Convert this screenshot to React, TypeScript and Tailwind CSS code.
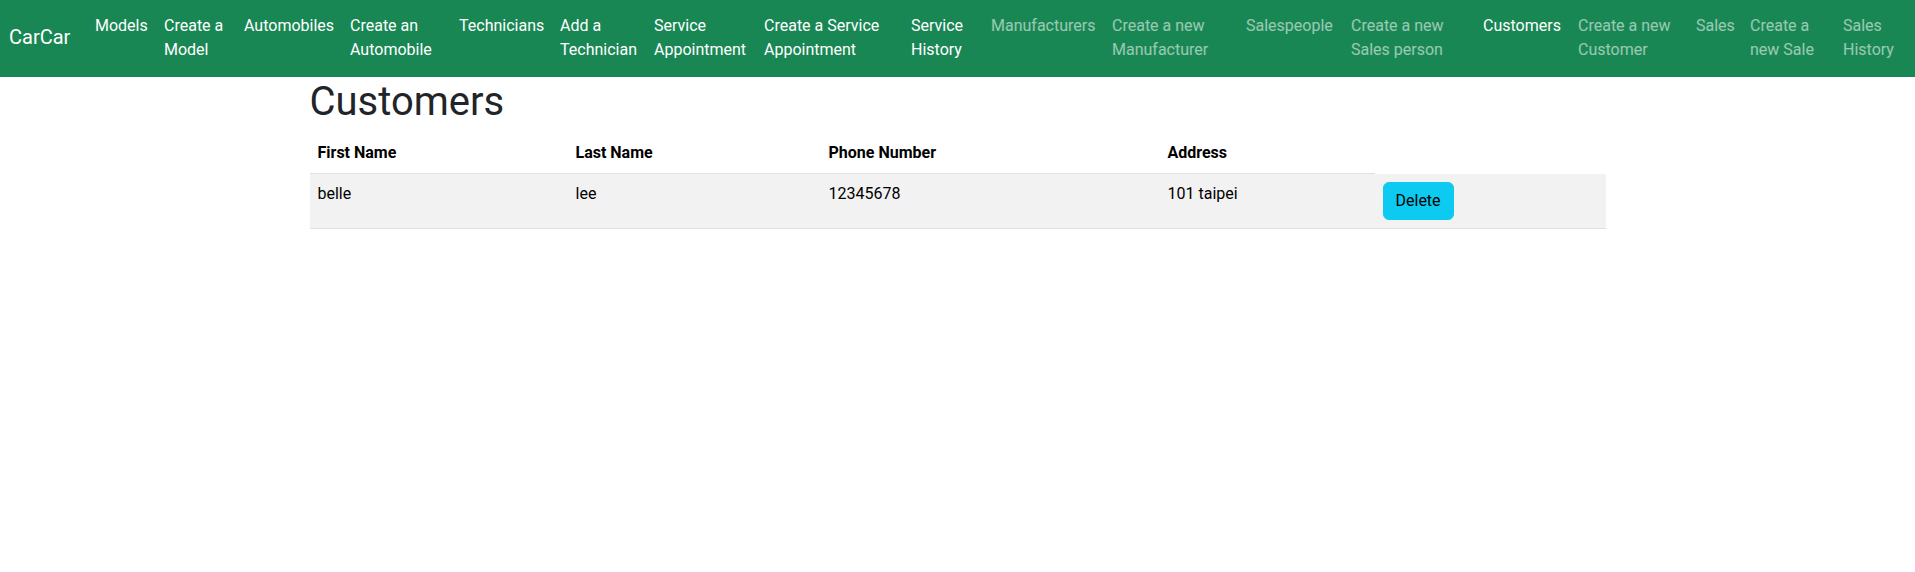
import React from "react";

interface NavItem {
  lines: string[];
  width: string;
  active: boolean;
}

const navItems: NavItem[] = [
  { lines: ["Models"], width: "w-[69px]", active: true },
  { lines: ["Create a", "Model"], width: "w-[80px]", active: true },
  { lines: ["Automobiles"], width: "w-[106px]", active: true },
  { lines: ["Create an", "Automobile"], width: "w-[109px]", active: true },
  { lines: ["Technicians"], width: "w-[101px]", active: true },
  { lines: ["Add a", "Technician"], width: "w-[94px]", active: true },
  { lines: ["Service", "Appointment"], width: "w-[110px]", active: true },
  { lines: ["Create a Service", "Appointment"], width: "w-[147px]", active: true },
  { lines: ["Service", "History"], width: "w-[80px]", active: true },
  { lines: ["Manufacturers"], width: "w-[121px]", active: false },
  { lines: ["Create a new", "Manufacturer"], width: "w-[134px]", active: false },
  { lines: ["Salespeople"], width: "w-[105px]", active: false },
  { lines: ["Create a new", "Sales person"], width: "w-[132px]", active: false },
  { lines: ["Customers"], width: "w-[95px]", active: true },
  { lines: ["Create a new", "Customer"], width: "w-[118px]", active: false },
  { lines: ["Sales"], width: "w-[54px]", active: false },
  { lines: ["Create a", "new Sale"], width: "w-[93px]", active: false },
  { lines: ["Sales", "History"], width: "w-[80px]", active: false },
];

const customers = [
  { first: "belle", last: "lee", phone: "12345678", address: "101 taipei" },
];

function Nav() {
  return (
    <nav className="flex items-start h-[77px] bg-[#198754] pl-[9px] overflow-hidden">
      <a className="w-[78px] shrink-0 mt-[22px] text-[20px] leading-[30px] text-white whitespace-nowrap">
        CarCar
      </a>
      <ul className="flex items-start pt-[14px]">
        {navItems.map((item, i) => (
          <li
            key={i}
            className={`${item.width} shrink-0 px-2 text-[16px] leading-6 whitespace-nowrap ${
              item.active ? "text-white" : "text-white/55"
            }`}
          >
            {item.lines.map((line, j) => (
              <div key={j}>{line}</div>
            ))}
          </li>
        ))}
      </ul>
    </nav>
  );
}

export default function App() {
  return (
    <div className="min-h-screen bg-white font-['Roboto','Helvetica_Neue',Arial,sans-serif] text-[#212529]">
      <Nav />
      <div className="w-[1320px] mx-auto px-3">
        <h1 className="pt-px text-[40px] leading-[48px] font-normal mb-[7px]">Customers</h1>
        <table className="w-full table-fixed border-collapse text-black text-[16px] leading-6">
          <colgroup>
            <col className="w-[258px]" />
            <col className="w-[253px]" />
            <col className="w-[339px]" />
            <col className="w-[215px]" />
            <col />
          </colgroup>
          <thead>
            <tr>
              <th className="p-2 text-left font-bold border-b border-[#dee2e6]">First Name</th>
              <th className="p-2 text-left font-bold border-b border-[#dee2e6]">Last Name</th>
              <th className="p-2 text-left font-bold border-b border-[#dee2e6]">Phone Number</th>
              <th className="p-2 text-left font-bold border-b border-[#dee2e6]">Address</th>
            </tr>
          </thead>
          <tbody>
            {customers.map((c, i) => (
              <tr key={i} className="bg-[#f2f2f2]">
                <td className="p-2 align-top border-b border-[#dee2e6]">{c.first}</td>
                <td className="p-2 align-top border-b border-[#dee2e6]">{c.last}</td>
                <td className="p-2 align-top border-b border-[#dee2e6]">{c.phone}</td>
                <td className="p-2 align-top border-b border-[#dee2e6]">{c.address}</td>
                <td className="p-2 align-top border-b border-[#dee2e6]">
                  <button className="inline-block px-3 py-[6px] border border-[#0dcaf0] bg-[#0dcaf0] text-black rounded-md text-[16px] leading-6">
                    Delete
                  </button>
                </td>
              </tr>
            ))}
          </tbody>
        </table>
      </div>
    </div>
  );
}
